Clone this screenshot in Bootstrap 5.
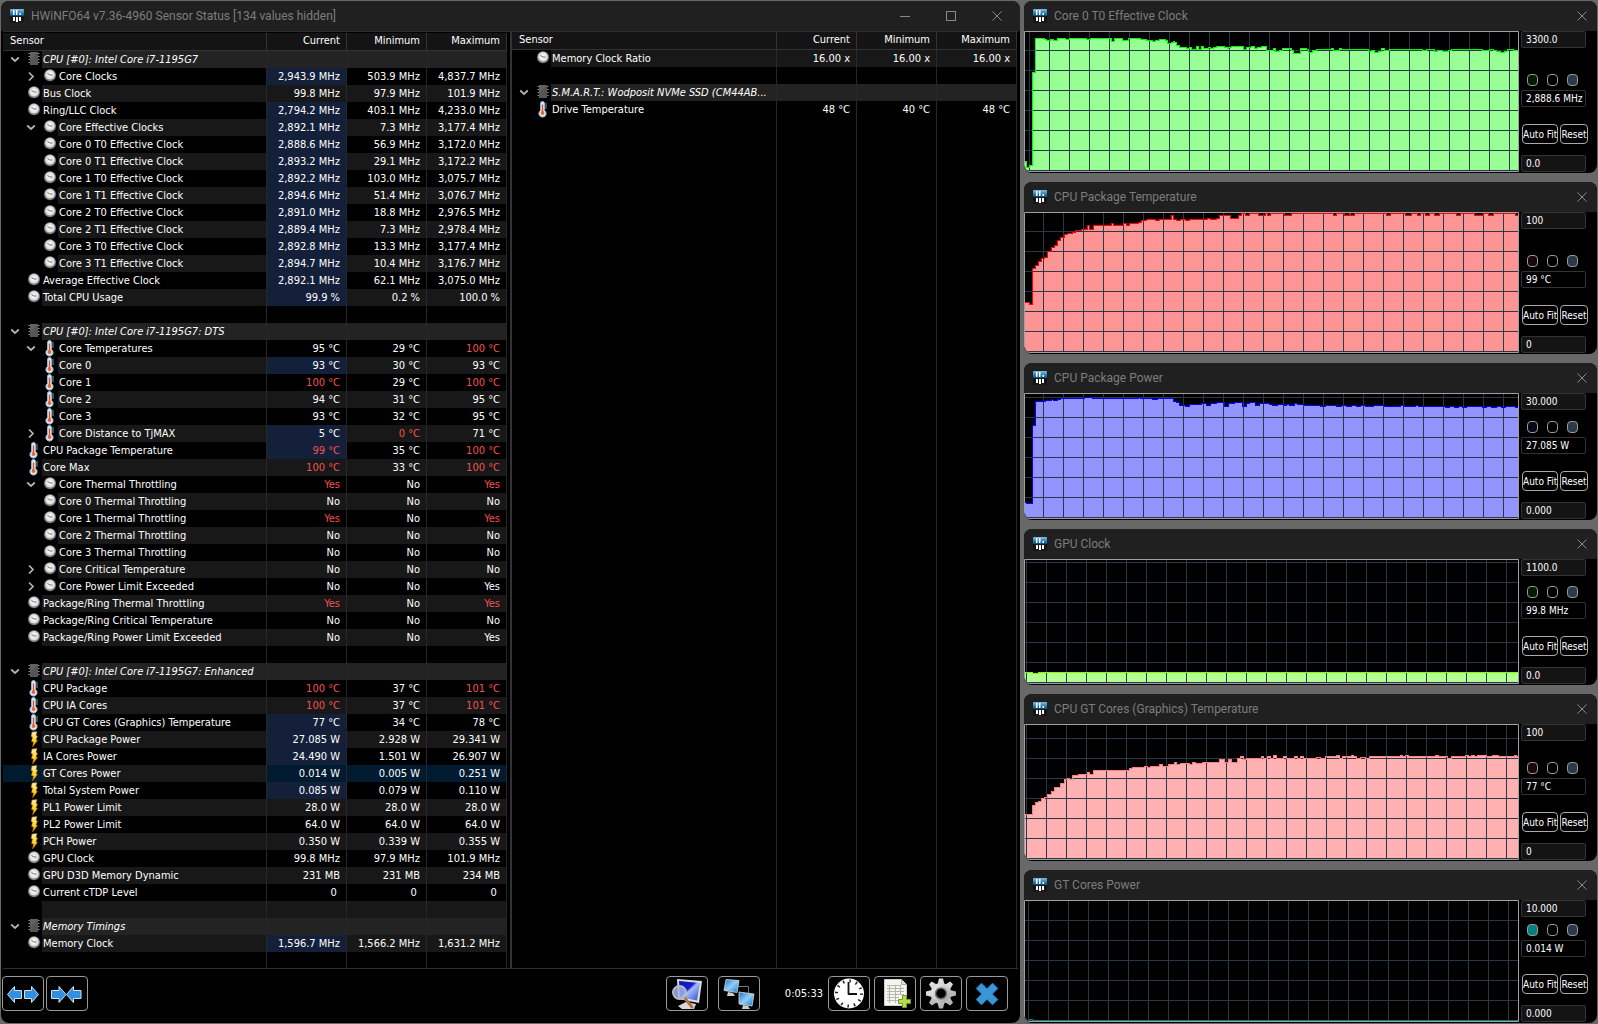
<!DOCTYPE html>
<html lang="en" data-bs-theme="dark">
<head>
<meta charset="utf-8">
<meta name="viewport" content="width=device-width, initial-scale=1">
<title>HWiNFO64 Sensor Status</title>
<link href="https://cdn.jsdelivr.net/npm/bootstrap@5.3.0/dist/css/bootstrap.min.css" rel="stylesheet">
<style>
:root{--edge:#2f2f2f;--colline:#23282e;--stripe:#181818;--hot:#f1524d}
body{min-height:100vh;background:#686868;font:11px/17px "DejaVu Sans Condensed",Roboto,sans-serif;color:#fff}
.desk{display:grid;grid-template-columns:minmax(0,1019fr) minmax(0,573fr);gap:4px;padding:1px;min-height:100vh}
.win{background:#000;border-radius:8px;overflow:hidden}
.bar{height:30px;padding:0 10px 1px 9px;background:#202020;color:#7d7d7d;font:12px/28px Roboto,sans-serif;gap:7px}
.bar h1,.bar h2{font:inherit;color:inherit;margin:0}
.wbtn{border:0;background:none;padding:0;color:#8a8a8a;line-height:0}
.wbtns{gap:36px;padding-right:8px}
.panes{display:grid;grid-template-columns:minmax(0,507fr) minmax(0,508fr);margin:0 2px;border-bottom:1px solid var(--edge)}
.pane-a{padding:1px 3px 0 0;border-top:1px solid var(--edge)}
.pane-b{padding:0 1px 0 0;border-left:2px solid #333;border-top:1px solid var(--edge)}
.sensors{width:100%;height:100%;table-layout:fixed;border-collapse:separate;border-spacing:0}
.sensors th,.sensors td{padding:0;font-weight:400;height:17px;border-right:1px solid var(--colline);text-align:right;white-space:nowrap}
.sensors td{padding-right:6px}
.sensors .vcol{width:80px}
.sensors thead th{height:18px;line-height:15px;vertical-align:top;background:#141414;border-color:#333;border-bottom:1px solid #333;padding-right:6px}
.sensors thead th:first-child{text-align:left;padding-left:7px}
.sensors .fill td{height:auto}
.sensors tbody tr:nth-child(odd):not(.fill) td,.sensors tbody tr:nth-child(odd):not(.fill) .nm{background:var(--stripe)}
.sensors tbody .grp td,.sensors tbody .grp .nm{background:#232323!important;font-style:italic}
.sensors tbody td.live{background:#14203a!important}
.sensors tbody .sel td,.sensors tbody .sel th{background:#001a30!important}
.sensors .hot{color:var(--hot)}
.slot{flex:0 0 23px;padding-right:6px}
.kid .slot{flex-basis:39px}
.twisty{border:0;background:none;padding:0;width:10px;height:17px;line-height:0;color:#b4b4b4}
.ico{flex:0 0 16px;height:17px}
.nm{flex:1 1 0;min-width:0;height:17px;padding-left:1px;text-align:left}
.foot{padding:7px 12px 12px 1px;height:54px;gap:2px}
.tool{width:42px;height:35px;padding:0;border:1px solid #999;border-radius:4px;background:#000;line-height:0}
.remote{margin-left:10px}
.elapsed{margin:0 5px 0 25px}
.plot{flex:1 1 0;min-width:0;border:1px solid #a0a0a0;border-radius:0 0 0 6px;overflow:hidden;margin-bottom:1px}
.plot svg{display:block;width:100%}
.side{flex:0 0 78px;padding:0 11px 1px 2px;font:10px/15px "DejaVu Sans Condensed",Roboto,sans-serif}
.side input{width:65px;height:17px;padding:0 0 0 4px;border:1px solid #333;border-radius:2px;background:#141414;color:#fff;font:inherit}
.side input[readonly]{background:#000}
.dots{gap:9px;padding:0 0 4px 6px}
.dot{width:11px;height:12px;padding:0;border:1px solid #999;border-radius:4px;background:#000}
.mini{flex:none;height:20px;padding:0;border:1px solid #aaa;border-radius:4px;background:#000;color:#fff;overflow:hidden;white-space:nowrap}
.mini-fit{width:36px}.mini-reset{width:28px}
.duo{gap:2px;margin:17px -2px 11px 1px}
.c-green{background:#061806}.c-red{background:#180808}.c-navy{background:#060a18}.c-teal{background:#008080}.c-grid{background:#2a3a4a}
</style>
<script src="https://cdn.jsdelivr.net/npm/bootstrap@5.3.0/dist/js/bootstrap.bundle.min.js"></script>
</head>
<body>
<svg width="0" height="0" class="position-absolute" aria-hidden="true">
  <defs>
    <linearGradient id="gApp" x2="0" y2="1"><stop offset="0" stop-color="#7cc0e2"/><stop offset=".45" stop-color="#0b5a8c"/><stop offset=".55" stop-color="#111"/><stop offset="1" stop-color="#1a1a1a"/></linearGradient>
    <linearGradient id="gBlue" x2="1" y2="1"><stop offset="0" stop-color="#0a14a0"/><stop offset=".42" stop-color="#1420d0"/><stop offset=".5" stop-color="#a8bcf4"/><stop offset="1" stop-color="#2a48d0"/></linearGradient>
    <linearGradient id="gScr" x2="1" y2="1"><stop offset="0" stop-color="#1b6fc4"/><stop offset=".5" stop-color="#8fd0f6"/><stop offset="1" stop-color="#1673c9"/></linearGradient>
    <linearGradient id="gBolt" x2="0" y2="1"><stop offset="0" stop-color="#fff0b0"/><stop offset=".6" stop-color="#ffd21f"/><stop offset="1" stop-color="#ff9a00"/></linearGradient>
    <linearGradient id="gGear" x2="1" y2="1"><stop offset="0" stop-color="#f6f6f6"/><stop offset="1" stop-color="#9c9c9c"/></linearGradient>
    <radialGradient id="gFace"><stop offset="0" stop-color="#fff"/><stop offset=".75" stop-color="#e2e2e2"/><stop offset="1" stop-color="#bdbdbd"/></radialGradient>
  </defs>
  <symbol id="app" viewBox="0 0 14 14"><rect width="14" height="14" rx="1" fill="url(#gApp)"/><path d="M3 1h1.500v5H3zM6 1h1.500v5H6zM9.500 4H11v2H9.500z" fill="#fff"/><path d="M3 8h2v4H3zM6 8h2v5H6zM9 8h2v4H9z" fill="#fff"/></symbol>
  <symbol id="chip" viewBox="0 0 16 17"><path d="M2.500 2.500h11M2.500 5.500h11M2.500 8.500h11M2.500 11.500h11" stroke="#8c8c8c"/><rect x="4" y="1" width="8" height="13" fill="#555"/><path d="M4 1h8L4 9z" fill="#626262"/></symbol>
  <symbol id="dial" viewBox="0 0 16 17"><circle cx="8" cy="7.200" r="6" fill="#7c7c7c"/><circle cx="8" cy="6.800" r="5" fill="url(#gFace)"/><path d="M5.500 5.500L8 7h2.500" fill="none" stroke="#77706a"/></symbol>
  <symbol id="therm" viewBox="0 0 16 17"><path d="M5.500 2.500a2 2 0 0 1 4 0v7a3.600 3.600 0 1 1-4 0z" fill="#d7eaf8" stroke="#8fb6d6"/><path d="M7.500 3.500v8" stroke="#e0501c" stroke-width="1.400"/><circle cx="7.500" cy="12" r="1.900" fill="#f0642a"/><path d="M10 3h2M10 5h2M10 7h2" stroke="#9bb8d0" stroke-width=".8"/></symbol>
  <symbol id="bolt" viewBox="0 0 16 17"><path d="M6 1l5-.5-1 4 1.500.5-1.500 4 1.500.5L6.500 16l1-5-2-.5L6.500 6 5 5.500z" fill="url(#gBolt)" stroke="#a86a10" stroke-width=".5"/></symbol>
  <symbol id="open" viewBox="0 0 10 17"><path d="M1.200 6.500L5 10l3.800-3.500" fill="none" stroke="currentColor" stroke-width="1.700"/></symbol>
  <symbol id="shut" viewBox="0 0 10 17"><path d="M3 4.500L7 8.500l-4 4" fill="none" stroke="currentColor" stroke-width="1.700"/></symbol>
  <symbol id="cross" viewBox="0 0 10 10"><path d="M.5.5l9 9M9.500.5l-9 9" stroke="currentColor" fill="none"/></symbol>
</svg>

<div class="desk">
  <main class="win d-flex flex-column">
    <header class="bar d-flex align-items-center">
      <svg width="14" height="14" aria-hidden="true"><use href="#app"/></svg>
      <h1 class="flex-grow-1 text-truncate">HWiNFO64 v7.36-4960 Sensor Status [134 values hidden]</h1>
      <div class="wbtns d-flex align-items-center">
        <button class="wbtn" type="button" aria-label="Minimize"><svg width="10" height="10"><path d="M0 5.500h10" stroke="currentColor"/></svg></button>
        <button class="wbtn" type="button" aria-label="Maximize"><svg width="10" height="10"><rect x=".5" y=".5" width="9" height="9" fill="none" stroke="currentColor"/></svg></button>
        <button class="wbtn" type="button" aria-label="Close"><svg width="10" height="10"><use href="#cross"/></svg></button>
      </div>
    </header>
    <div class="panes flex-grow-1">
      <section class="pane-a">
        <table class="sensors">
          <colgroup><col><col class="vcol"><col class="vcol"><col class="vcol"></colgroup>
          <thead><tr><th scope="col">Sensor</th><th scope="col">Current</th><th scope="col">Minimum</th><th scope="col">Maximum</th></tr></thead>
          <tbody id="listA"></tbody>
        </table>
      </section>
      <section class="pane-b">
        <table class="sensors">
          <colgroup><col><col class="vcol"><col class="vcol"><col class="vcol"></colgroup>
          <thead><tr><th scope="col">Sensor</th><th scope="col">Current</th><th scope="col">Minimum</th><th scope="col">Maximum</th></tr></thead>
          <tbody id="listB"></tbody>
        </table>
      </section>
    </div>
    <footer class="foot d-flex align-items-center">
      <button class="tool" type="button" aria-label="Expand columns"><svg width="40" height="33"><g fill="#2f8fe0" stroke="#cfe3f4"><path d="M4.500 17.500l7-8v4h7v8h-7v4z"/><path d="M35.500 17.500l-7-8v4h-7v8h7v4z"/></g></svg></button>
      <button class="tool" type="button" aria-label="Shrink columns"><svg width="40" height="33"><g fill="#2f8fe0" stroke="#cfe3f4"><path d="M19 17.500l-7-8v4H4.500v8H12v4z"/><path d="M19.500 17.500l7-8v4H34v8h-7.500v4z"/></g></svg></button>
      <div class="d-flex align-items-center ms-auto">
        <button class="tool" type="button" aria-label="Hardware summary"><svg width="40" height="33"><path d="M11 29l8-4 10 2-2 5H15z" fill="#d8d8d8"/><path d="M10 2l25 2-3 22-21-4z" fill="#dedede"/><path d="M12 4l21 2-3 17.500L13 20z" fill="url(#gBlue)"/><path d="M17 20l8 10" stroke="#b5714a" stroke-width="3" stroke-linecap="round"/><circle cx="12.500" cy="15.500" r="6.500" fill="#9db4e6" fill-opacity=".85" stroke="#b8bcc4" stroke-width="2"/></svg></button>
        <button class="tool remote" type="button" aria-label="Remote sensors"><svg width="40" height="33"><path d="M19 9.500h10.500V17" fill="none" stroke="#777"/><path d="M7 2.500l13 1-2 12-13-2z" fill="url(#gScr)" stroke="#ddd" stroke-width=".8"/><path d="M9 15l5 1 2 3H8z" fill="#ccc"/><path d="M20 15l15 2-2 12-13-2z" fill="url(#gScr)" stroke="#ddd" stroke-width=".8"/><path d="M24 28l5 1 2 3h-8z" fill="#ccc"/></svg></button>
        <time class="elapsed">0:05:33</time>
        <div class="d-flex gap-1">
          <button class="tool" type="button" aria-label="Reset timer"><svg width="40" height="33"><circle cx="20" cy="16.500" r="15" fill="#fff"/><circle cx="20" cy="16.500" r="12.500" fill="none" stroke="#222" stroke-width="3" stroke-dasharray="1.500 5.045"/><path d="M19.500 5v12.500M19 17h9" stroke="#111" stroke-width="1.800"/></svg></button>
          <button class="tool" type="button" aria-label="Start logging"><svg width="40" height="33"><path d="M9.500 2.500h17l5 5v21h-22z" fill="#f5f5f0" stroke="#ccc"/><path d="M26.500 2.500v5h5" fill="#ddd" stroke="#aaa"/><path d="M12 8.500h14M12 11.500h17M12 14.500h17M12 17.500h17M12 20.500h12M12 23.500h11M14.500 8v18M20.500 8v18M25.500 8v10" stroke="#b5b5ac" fill="none"/><path d="M27.500 18.500h4v4h4v4h-4v4h-4v-4h-4v-4h4z" fill="#b5dc50" stroke="#6f9a20"/></svg></button>
          <button class="tool" type="button" aria-label="Settings"><svg width="40" height="33"><g transform="translate(20 16.500)" fill="url(#gGear)"><circle r="10.500"/><g id="teeth"><path d="M-2-15h4l1.500 6h-7zM-2 15h4l1.500-6h-7zM-15-2v4l6 1.500v-7zM15-2v4l-6 1.500v-7z"/></g><use href="#teeth" transform="rotate(45)"/><circle r="5.500" fill="#000" stroke="#777" stroke-width="1.500"/></g></svg></button>
          <button class="tool" type="button" aria-label="Close sensors"><svg width="40" height="33"><path d="M14.500 6l5.500 5.500L25.500 6l5.500 5.500-5.500 5.500 5.500 5.500-5.500 5.500-5.500-5.500-5.500 5.500L9 22.500l5.500-5.500L9 11.500z" fill="#3b96d8" stroke="#1d6cab" stroke-width=".6"/></svg></button>
        </div>
      </div>
    </footer>
  </main>
  <aside class="d-flex flex-column justify-content-between" id="graphs"></aside>
</div>

<script>
/* level (0 group, 1 sensor, 2 nested) | icon | twisty (v open, > shut) | name | current | minimum | maximum
   "*" marks a value that just changed, "!" a value over its limit */
const listA = `0|chip|v|CPU [#0]: Intel Core i7-1195G7
2|dial|>|Core Clocks|*2,943.9 MHz|503.9 MHz|4,837.7 MHz
1|dial||Bus Clock|99.8 MHz|97.9 MHz|101.9 MHz
1|dial||Ring/LLC Clock|*2,794.2 MHz|403.1 MHz|4,233.0 MHz
2|dial|v|Core Effective Clocks|*2,892.1 MHz|7.3 MHz|3,177.4 MHz
2|dial||Core 0 T0 Effective Clock|*2,888.6 MHz|56.9 MHz|3,172.0 MHz
2|dial||Core 0 T1 Effective Clock|*2,893.2 MHz|29.1 MHz|3,172.2 MHz
2|dial||Core 1 T0 Effective Clock|*2,892.2 MHz|103.0 MHz|3,075.7 MHz
2|dial||Core 1 T1 Effective Clock|*2,894.6 MHz|51.4 MHz|3,076.7 MHz
2|dial||Core 2 T0 Effective Clock|*2,891.0 MHz|18.8 MHz|2,976.5 MHz
2|dial||Core 2 T1 Effective Clock|*2,889.4 MHz|7.3 MHz|2,978.4 MHz
2|dial||Core 3 T0 Effective Clock|*2,892.8 MHz|13.3 MHz|3,177.4 MHz
2|dial||Core 3 T1 Effective Clock|*2,894.7 MHz|10.4 MHz|3,176.7 MHz
1|dial||Average Effective Clock|*2,892.1 MHz|62.1 MHz|3,075.0 MHz
1|dial||Total CPU Usage|*99.9 %|0.2 %|100.0 %
-
0|chip|v|CPU [#0]: Intel Core i7-1195G7: DTS
2|therm|v|Core Temperatures|95 °C|29 °C|!100 °C
2|therm||Core 0|*93 °C|30 °C|93 °C
2|therm||Core 1|!100 °C|29 °C|!100 °C
2|therm||Core 2|94 °C|31 °C|95 °C
2|therm||Core 3|93 °C|32 °C|95 °C
2|therm|>|Core Distance to TjMAX|*5 °C|!0 °C|71 °C
1|therm||CPU Package Temperature|*!99 °C|35 °C|!100 °C
1|therm||Core Max|!100 °C|33 °C|!100 °C
2|dial|v|Core Thermal Throttling|!Yes|No|!Yes
2|dial||Core 0 Thermal Throttling|No|No|No
2|dial||Core 1 Thermal Throttling|!Yes|No|!Yes
2|dial||Core 2 Thermal Throttling|No|No|No
2|dial||Core 3 Thermal Throttling|No|No|No
2|dial|>|Core Critical Temperature|No|No|No
2|dial|>|Core Power Limit Exceeded|No|No|Yes
1|dial||Package/Ring Thermal Throttling|!Yes|No|!Yes
1|dial||Package/Ring Critical Temperature|No|No|No
1|dial||Package/Ring Power Limit Exceeded|No|No|Yes
-
0|chip|v|CPU [#0]: Intel Core i7-1195G7: Enhanced
1|therm||CPU Package|!100 °C|37 °C|!101 °C
1|therm||CPU IA Cores|!100 °C|37 °C|!101 °C
1|therm||CPU GT Cores (Graphics) Temperature|*77 °C|34 °C|78 °C
1|bolt||CPU Package Power|*27.085 W|2.928 W|29.341 W
1|bolt||IA Cores Power|*24.490 W|1.501 W|26.907 W
1|bolt||GT Cores Power|0.014 W|0.005 W|0.251 W|sel
1|bolt||Total System Power|*0.085 W|0.079 W|0.110 W
1|bolt||PL1 Power Limit|28.0 W|28.0 W|28.0 W
1|bolt||PL2 Power Limit|64.0 W|64.0 W|64.0 W
1|bolt||PCH Power|0.350 W|0.339 W|0.355 W
1|dial||GPU Clock|99.8 MHz|97.9 MHz|101.9 MHz
1|dial||GPU D3D Memory Dynamic|231 MB|231 MB|234 MB
1|dial||Current cTDP Level|0&nbsp;|0&nbsp;|0&nbsp;
-
0|chip|v|Memory Timings
1|dial||Memory Clock|*1,596.7 MHz|1,566.2 MHz|1,631.2 MHz`;
const listB = `1|dial||Memory Clock Ratio|16.00 x|16.00 x|16.00 x
-
0|chip|v|S.M.A.R.T.: Wodposit NVMe SSD (CM44AB...
1|therm||Drive Temperature|48 °C|40 °C|48 °C`;

function cell(v = '') {
  const cls = (v.includes('*') ? 'live ' : '') + (v.includes('!') ? 'hot' : '');
  return `<td class="${cls}">${v.replace(/[*!]/g, '')}</td>`;
}
function row(line) {
  const [lvl, icon, tw, name = '', a, b, c, extra = ''] = line.split('|');
  const cls = (lvl === '0' ? 'grp ' : lvl === '2' ? 'kid ' : '') + extra;
  const btn = tw ? `<button class="twisty" type="button" aria-label="${tw === 'v' ? 'Collapse' : 'Expand'}"><svg width="10" height="17"><use href="#${tw === 'v' ? 'open' : 'shut'}"/></svg></button>` : '';
  const ico = lvl === '-' ? '<span class="ico"></span>' : `<svg class="ico" aria-hidden="true"><use href="#${icon}"/></svg>`;
  return `<tr class="${cls}"><th scope="row"><div class="d-flex"><span class="slot d-flex justify-content-end">${btn}</span>${ico}<span class="nm text-truncate">${name}</span></div></th>${cell(a)}${cell(b)}${cell(c)}</tr>`;
}
const fill = '<tr class="fill"><td></td><td></td><td></td><td></td></tr>';
document.getElementById('listA').innerHTML = listA.split('\n').map(row).join('') + fill;
document.getElementById('listB').innerHTML = listB.split('\n').map(row).join('') + fill;

/* h: plot height, gx/gy: phase of the 20px grid, data: "x,y" where each step of the trace begins */
const graphs = [
 {t:'Core 0 T0 Effective Clock',max:'3300.0',min:'0.0',now:'2,888.6 MHz',h:139,gx:4,gy:18,s:'#00ff00',f:'#98ff94',dot:'c-green',
  data:'0,129 1,135 4,133 7,40 10,6 19,7 21,8 25,7 28,8 32,6 40,7 44,6 61,7 65,6 86,9 89,6 97,8 103,6 115,7 121,8 127,9 130,8 134,7 140,8 142,11 146,10 148,9 149,10 151,13 154,15 161,16 164,15 166,17 171,14 173,17 176,14 178,16 183,15 185,16 188,15 191,14 199,15 202,16 203,15 206,14 218,17 221,15 226,14 229,16 232,15 236,14 241,18 248,16 250,19 254,18 257,16 266,18 268,21 275,16 281,17 283,20 287,18 291,17 306,16 308,18 314,16 316,17 343,19 346,18 349,20 353,19 356,16 359,18 364,17 397,18 401,17 409,19 412,18 417,19 423,18 426,17 457,18 464,17 468,18 471,19 475,20 479,19 482,17 488,18'},
 {t:'CPU Package Temperature',max:'100',min:'0',now:'99 °C',h:139,gx:18,gy:18,s:'#ff0000',f:'#ff9494',dot:'c-red',
  data:'0,89 4,91 7,55 10,52 13,48 16,45 19,44 22,38 26,34 29,32 32,27 35,24 39,21 42,20 47,19 50,17 56,16 62,12 64,16 68,12 86,10 88,12 98,10 101,12 104,10 113,9 116,7 121,6 130,7 134,6 146,2 148,6 151,7 155,6 160,7 164,6 182,5 185,6 191,5 194,2 205,5 213,2 216,0 220,2 224,0 233,2 240,0 242,2 245,0 259,2 266,0 308,2 311,0 319,2 324,0 325,2 329,0 361,2 365,0 380,2 386,0 392,2 395,0 400,2 404,0 409,2 414,0 431,2 435,0 449,2 458,0 463,2 468,0 490,2'},
 {t:'CPU Package Power',max:'30.000',min:'0.000',now:'27.085 W',h:124,gx:18,gy:3,s:'#0000ff',f:'#9494ff',dot:'c-navy',
  data:'0,108 1,109 7,31 10,7 20,6 26,5 28,6 32,5 35,4 59,3 67,4 113,3 115,4 127,5 132,4 148,7 151,8 154,11 160,12 164,10 176,9 181,11 185,9 191,8 199,12 203,9 209,8 217,12 221,9 224,8 230,11 234,9 244,10 247,11 252,10 259,11 261,10 264,11 269,9 272,10 279,11 295,12 300,11 311,12 316,11 321,12 326,11 331,12 335,11 340,12 348,11 359,12 375,11 379,12 390,11 393,12 420,13 424,12 429,13 433,12 437,13 441,12 457,13 461,12 466,13 471,12 476,13 480,12 490,13'},
 {t:'GPU Clock',max:'1100.0',min:'0.0',now:'99.8 MHz',h:123,gx:21,gy:2,s:'#80ff00',f:'#b4ff94',dot:'c-green',data:'0,112 7,113 13,112'},
 {t:'CPU GT Cores (Graphics) Temperature',max:'100',min:'0',now:'77 °C',h:134,gx:21,gy:13,s:'#ff8080',f:'#ffb0b0',dot:'c-red',
  data:'0,89 7,80 10,77 13,76 16,73 19,72 22,69 26,66 29,62 35,58 39,54 42,53 44,54 47,50 53,49 62,47 64,49 68,45 104,43 107,42 119,41 122,42 125,41 134,39 137,41 143,39 149,37 151,39 155,38 164,39 167,37 170,38 177,37 194,34 199,37 203,34 206,37 212,33 215,31 218,34 221,33 236,31 238,33 242,31 245,33 248,30 251,33 258,31 261,33 269,31 272,33 275,31 278,33 291,32 295,33 300,31 311,30 314,33 317,31 326,30 328,31 331,33 335,32 340,33 344,31 375,30 377,31 380,30 383,31 410,30 413,31 422,33 426,31 440,30 443,31 446,30 449,31 452,30 461,31 467,30 473,31 489,30 491,31'},
 {t:'GT Cores Power',max:'10.000',min:'0.000',now:'0.014 W',h:120,gx:3,gy:19,s:'#008080',f:'#80c0c0',dot:'c-teal',data:'0,119 4,118 7,119'}
];
document.getElementById('graphs').innerHTML = graphs.map((g, i) => {
  let d = `M-2 ${g.h + 2}`;
  g.data.split(' ').forEach(p => { const [x, y] = p.split(','); d += x === '0' ? `V${y}` : `H${x}V${y}`; });
  d += `H3000V${g.h + 2}`;
  return `<section class="win">
    <header class="bar d-flex align-items-center"><svg width="14" height="14" aria-hidden="true"><use href="#app"/></svg><h2 class="flex-grow-1 text-truncate">${g.t}</h2>
      <button class="wbtn" type="button" aria-label="Close"><svg width="10" height="10"><use href="#cross"/></svg></button></header>
    <div class="d-flex">
      <div class="plot"><svg height="${g.h}" shape-rendering="crispEdges" role="img" aria-label="${g.t} history">
        <defs><pattern id="grid${i}" width="20" height="20" patternUnits="userSpaceOnUse" x="${g.gx}" y="${g.gy}"><path d="M0 0h20v1H1v19H0z" fill="#283848"/></pattern></defs>
        <g transform="translate(.5 .5)"><path d="${d}" fill="${g.f}"/></g>
        <rect width="100%" height="100%" fill="url(#grid${i})"/>
        <g transform="translate(.5 .5)"><path d="${d}" fill="none" stroke="${g.s}"/></g></svg></div>
      <div class="side d-flex flex-column">
        <input type="text" aria-label="${g.t} scale maximum" value="${g.max}">
        <div class="dots d-flex mt-auto"><button class="dot ${g.dot}" type="button" aria-label="Trace colour"></button><button class="dot" type="button" aria-label="Background colour"></button><button class="dot c-grid" type="button" aria-label="Grid colour"></button></div>
        <input type="text" readonly aria-label="${g.t} current value" value="${g.now}">
        <div class="duo d-flex"><button class="mini mini-fit" type="button">Auto Fit</button><button class="mini mini-reset" type="button">Reset</button></div>
        <input type="text" aria-label="${g.t} scale minimum" value="${g.min}">
      </div>
    </div></section>`;
}).join('');
</script>
</body>
</html>
